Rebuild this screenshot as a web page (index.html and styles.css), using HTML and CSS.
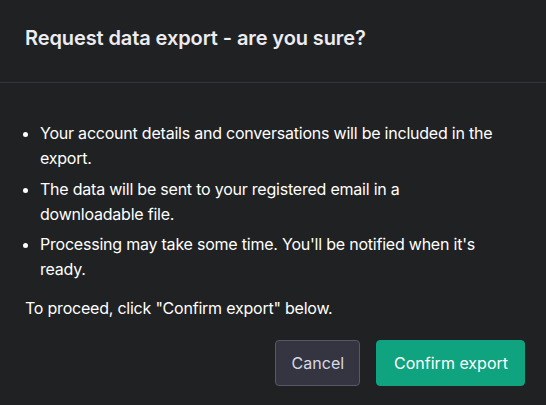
FILE: index.html
```html
<!DOCTYPE html>
<html>
<head>
<meta charset="utf-8">
<link rel="stylesheet" href="styles.css">
</head>
<body>
<div class="dialog">
  <div class="header">
    <h2 class="title">Request data export - are you sure?</h2>
  </div>
  <div class="content">
    <ul class="list">
      <li>Your account details and conversations will be included in the export.</li>
      <li>The data will be sent to your registered email in a downloadable file.</li>
      <li>Processing may take some time. You'll be notified when it's ready.</li>
    </ul>
    <p class="note">To proceed, click "Confirm export" below.</p>
    <div class="actions">
      <button class="btn btn-neutral">Cancel</button>
      <button class="btn btn-primary">Confirm export</button>
    </div>
  </div>
</div>
</body>
</html>
```
FILE: styles.css
```css
html, body {
  margin: 0;
  padding: 0;
  background: #202123;
}
body {
  font-family: Inter, "Liberation Sans", sans-serif;
  color: #ffffff;
  width: 546px;
  height: 405px;
  overflow: hidden;
}
.dialog {
  display: flex;
  flex-direction: column;
}
.header {
  border-bottom: 1px solid #343541;
  padding: 24px 24px 0 25px;
  height: 58px;
}
.title {
  margin: 0;
  font-size: 20px;
  line-height: 28px;
  font-weight: 600;
  color: #ececf1;
  letter-spacing: -0.1px;
}
.content {
  padding: 0 21px 0 25px;
}
.list {
  margin: 38px 30px 0 0;
  padding: 0 0 0 15px;
  font-size: 16px;
  line-height: 25.3px;
  letter-spacing: -0.22px;
}
.list li {
  margin-bottom: 5px;
}
.note {
  margin: 13px 0 0 0;
  font-size: 16px;
  line-height: 25px;
  letter-spacing: -0.22px;
}
.actions {
  display: flex;
  justify-content: flex-end;
  gap: 16px;
  margin-top: 19px;
}
.btn {
  font-family: inherit;
  font-size: 16px;
  height: 46px;
  border-radius: 4px;
  padding: 0 16px;
  cursor: pointer;
}
.btn-neutral {
  background: #343541;
  color: #d9d9e3;
  border: 1px solid #565869;
  padding: 0 15px 0 16px;
}
.btn-primary {
  background: #10a37f;
  color: #ffffff;
  border: 1px solid #10a37f;
  padding: 0 16px 0 17px;
}
```
